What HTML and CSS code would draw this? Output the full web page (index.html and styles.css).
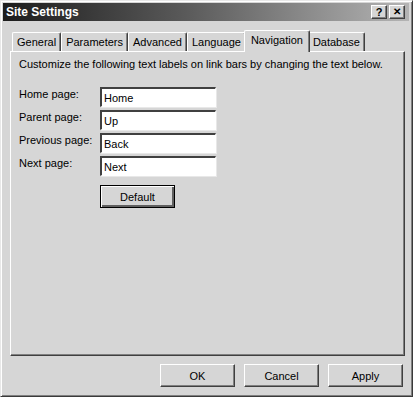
FILE: index.html
```html
<!DOCTYPE html>
<html lang="en">
<head>
    <meta charset="UTF-8">
    <title>Site Settings</title>
    <link rel="stylesheet" href="styles.css">
</head>
<body>
    <div class="window">
        <div class="title-bar">
            <span class="title">Site Settings</span>
            <div class="title-buttons">
                <span class="title-btn">?</span>
                <span class="title-btn close">&#x2715;</span>
            </div>
        </div>

        <div class="tabs">
            <span class="tab">General</span>
            <span class="tab">Parameters</span>
            <span class="tab">Advanced</span>
            <span class="tab">Language</span>
            <span class="tab active">Navigation</span>
            <span class="tab">Database</span>
        </div>

        <div class="panel">
            <p class="intro">Customize the following text labels on link bars by changing the text below.</p>

            <div class="fields">
                <div class="field-row">
                    <label for="home">Home page:</label>
                    <input type="text" id="home" value="Home">
                </div>
                <div class="field-row">
                    <label for="parent">Parent page:</label>
                    <input type="text" id="parent" value="Up">
                </div>
                <div class="field-row">
                    <label for="previous">Previous page:</label>
                    <input type="text" id="previous" value="Back">
                </div>
                <div class="field-row">
                    <label for="next">Next page:</label>
                    <input type="text" id="next" value="Next">
                </div>
            </div>

            <button class="btn default-btn">Default</button>
        </div>

        <div class="footer">
            <button class="btn">OK</button>
            <button class="btn">Cancel</button>
            <button class="btn">Apply</button>
        </div>
    </div>
</body>
</html>
```

FILE: styles.css
```css
* {
    margin: 0;
    padding: 0;
    box-sizing: border-box;
}

body {
    font-family: 'Liberation Sans', Arial, sans-serif;
    font-size: 11px;
    color: #000;
    background: #d6d6d6;
}

.window {
    width: 413px;
    height: 397px;
    background: #d6d6d6;
    border-top: 1px solid #e8e8e8;
    border-left: 1px solid #e8e8e8;
    border-right: 1px solid #3a3a3a;
    border-bottom: 1px solid #3a3a3a;
    box-shadow: inset 1px 1px 0 #fff, inset -1px -1px 0 #808080;
    padding: 2px 3px 0 2px;
    display: flex;
    flex-direction: column;
}

.title-bar {
    height: 18px;
    background: linear-gradient(90deg, #1c1c1c 0%, #5a5a5a 45%, #b4b4b4 100%);
    display: flex;
    align-items: center;
    justify-content: space-between;
    padding: 0 4px 0 3px;
}

.title {
    color: #fff;
    font-weight: bold;
    font-size: 12px;
}

.title-buttons {
    display: flex;
    gap: 2px;
}

.title-btn {
    width: 16px;
    height: 14px;
    background: #d6d6d6;
    border-top: 1px solid #fff;
    border-left: 1px solid #fff;
    border-right: 1px solid #404040;
    border-bottom: 1px solid #404040;
    box-shadow: inset -1px -1px 0 #808080;
    font-weight: bold;
    font-size: 11px;
    line-height: 12px;
    text-align: center;
}

.title-btn.close {
    font-size: 10px;
}

.tabs {
    display: flex;
    align-items: flex-end;
    margin-top: 8px;
    padding-left: 9px;
    height: 22px;
    position: relative;
    z-index: 1;
}

.tab {
    height: 19px;
    padding: 0 4px;
    line-height: 18px;
    border-top: 1px solid #fff;
    border-left: 1px solid #fff;
    border-right: 1px solid #404040;
    border-radius: 2px 2px 0 0;
    box-shadow: inset -1px 0 0 #808080;
    white-space: nowrap;
}

.tab.active {
    height: 22px;
    padding: 0 6px;
    margin: 0 -2px;
    line-height: 18px;
    background: #d6d6d6;
    margin-bottom: -1px;
    z-index: 2;
    position: relative;
}

.panel {
    margin-left: 7px;
    width: 395px;
    height: 305px;
    border-top: 1px solid #fff;
    border-left: 1px solid #fff;
    border-right: 1px solid #404040;
    border-bottom: 1px solid #404040;
    box-shadow: inset -1px -1px 0 #808080;
    padding: 5px 8px;
}

.intro {
    line-height: 14px;
    margin-bottom: 16px;
}

.fields {
    display: flex;
    flex-direction: column;
    gap: 3px;
}

.field-row {
    display: flex;
    align-items: flex-start;
}

.field-row label {
    width: 81px;
    line-height: 14px;
}

.field-row input {
    width: 116px;
    height: 20px;
    font-family: inherit;
    font-size: 11px;
    padding: 2px 2px;
    background: #fff;
    border-top: 2px solid #404040;
    border-left: 2px solid #404040;
    border-right: 1px solid #fff;
    border-bottom: 1px solid #fff;
    box-shadow: 1px 1px 0 #e8e8e8;
    outline: none;
}

.btn {
    width: 75px;
    height: 23px;
    font-family: inherit;
    font-size: 11px;
    background: #d6d6d6;
    color: #000;
    border-top: 1px solid #fff;
    border-left: 1px solid #fff;
    border-right: 1px solid #404040;
    border-bottom: 1px solid #404040;
    box-shadow: inset -1px -1px 0 #808080;
}

.default-btn {
    margin-top: 9px;
    margin-left: 81px;
    border: 1px solid #000;
    box-shadow: inset 1px 1px 0 #fff, inset -2px -2px 0 #606060;
}

.footer {
    display: flex;
    justify-content: flex-end;
    gap: 9px;
    padding-right: 6px;
    margin-top: 8px;
}
```
